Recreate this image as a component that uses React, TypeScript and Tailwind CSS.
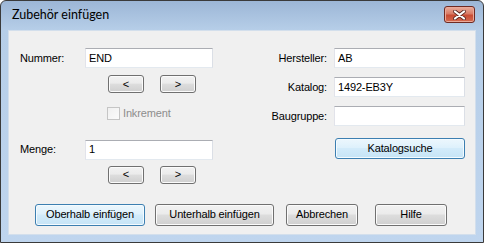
import React from "react";

// shared looks
const font = "font-['Liberation_Sans',Arial,sans-serif] text-[11px] tracking-[-0.15px] text-black";
const btnGray =
  "flex items-center justify-center rounded-[3px] border border-[#707070] shadow-[inset_0_0_0_1px_#fbfbfb] bg-[linear-gradient(to_bottom,#f2f2f2_0%,#ebebeb_45%,#dddddd_50%,#cfcfcf_100%)]";
const btnBlue =
  "flex items-center justify-center rounded-[3px] border border-[#3c7fb1] shadow-[inset_0_0_0_1px_#f4fbff] bg-[linear-gradient(to_bottom,#ecf7fd_0%,#def1fc_45%,#d2ebfa_50%,#c6e4f6_100%)]";
const input =
  "h-[20px] bg-white border border-[#abadb3] border-l-[#e2e3ea] border-r-[#dbdfe6] border-b-[#e3e9ef] pl-[3px] flex items-center";

type BoxProps = { value?: string; width: string };

function TextBox({ value, width }: BoxProps) {
  return <div className={`${input} ${width}`}>{value}</div>;
}

function ArrowButtons() {
  return (
    <div className="flex pl-[99px] gap-[16px]">
      <div className={`${btnGray} w-[36px] h-[18px]`}>&lt;</div>
      <div className={`${btnGray} w-[36px] h-[18px]`}>&gt;</div>
    </div>
  );
}

function CloseButton() {
  return (
    <div className="w-[31px] h-[17px] rounded-[3px] border border-[#6f2a22] shadow-[inset_0_0_0_1px_#eaa999] bg-[linear-gradient(to_bottom,#e9ad9c_0%,#d97b66_45%,#c84c34_55%,#d46a50_100%)] flex items-center justify-center">
      <svg width="15" height="10" viewBox="0 0 15 10">
        <path d="M3 1.5 L12 8.5 M12 1.5 L3 8.5" stroke="#5b2a24" strokeWidth="3.8" strokeLinecap="round" />
        <path d="M3 1.5 L12 8.5 M12 1.5 L3 8.5" stroke="#ffffff" strokeWidth="2.2" strokeLinecap="round" />
      </svg>
    </div>
  );
}

export default function App() {
  return (
    <div className="w-[484px] h-[243px] rounded-t-[6px] border border-[#3a3a3a] bg-[linear-gradient(to_bottom,#9cb6d6_0px,#b6cee8_29px,#bfd5ee_100%)] flex flex-col overflow-hidden">
      {/* title bar */}
      <div className="h-[29px] shrink-0 flex items-center justify-between pl-[11px] pr-[8px]">
        <span className="font-['Lato','Noto_Sans',sans-serif] text-[12.5px] text-black mt-[-1px]">
          Zubehör einfügen
        </span>
        <div className="mt-[-2px]">
          <CloseButton />
        </div>
      </div>

      {/* client */}
      <div className="flex-1 px-[7px] pb-[7px]">
        <div className={`${font} h-full bg-[#f0f0f0] border border-[#d3dfec] flex flex-col`}>
          <div className="flex">
            {/* left column */}
            <div className="w-[239px] flex flex-col pt-[17px]">
              <div className="flex items-center">
                <span className="w-[76px] pl-[11px]">Nummer:</span>
                <TextBox value="END" width="w-[128px]" />
              </div>
              <div className="mt-[7px]">
                <ArrowButtons />
              </div>
              <div className="flex items-center pl-[98px] mt-[12px] text-[#8d8d8d]">
                <div className="w-[13px] h-[13px] border border-[#c5c5c5] bg-[linear-gradient(135deg,#f0f0f0,#fbfbfb)]" />
                <span className="ml-[3px]">Inkrement</span>
              </div>
              <div className="flex items-center mt-[18px]">
                <span className="w-[76px] pl-[11px]">Menge:</span>
                <TextBox value="1" width="w-[128px]" />
              </div>
              <div className="mt-[6px]">
                <ArrowButtons />
              </div>
            </div>

            {/* right column */}
            <div className="flex flex-col pt-[17px]">
              <div className="flex flex-col gap-[9px]">
                {[
                  ["Hersteller:", "AB"],
                  ["Katalog:", "1492-EB3Y"],
                  ["Baugruppe:", ""],
                ].map(([label, value]) => (
                  <div key={label} className="flex items-center">
                    <span className="w-[80px] text-right pr-[1px]">{label}</span>
                    <div className="ml-[6px]">
                      <TextBox value={value} width="w-[131px]" />
                    </div>
                  </div>
                ))}
              </div>
              <div className="pl-[87px] mt-[12px]">
                <div className={`${btnBlue} w-[130px] h-[21px]`}>Katalogsuche</div>
              </div>
            </div>
          </div>

          {/* bottom buttons */}
          <div className="flex items-center mt-[20px] pl-[26px]">
            <div className={`${btnBlue} w-[110px] h-[22px]`}>Oberhalb einfügen</div>
            <div className={`${btnGray} w-[119px] h-[22px] ml-[10px]`}>Unterhalb einfügen</div>
            <div className={`${btnGray} w-[72px] h-[22px] ml-[12px]`}>Abbrechen</div>
            <div className={`${btnGray} w-[72px] h-[22px] ml-[17px]`}>Hilfe</div>
          </div>
        </div>
      </div>
    </div>
  );
}
